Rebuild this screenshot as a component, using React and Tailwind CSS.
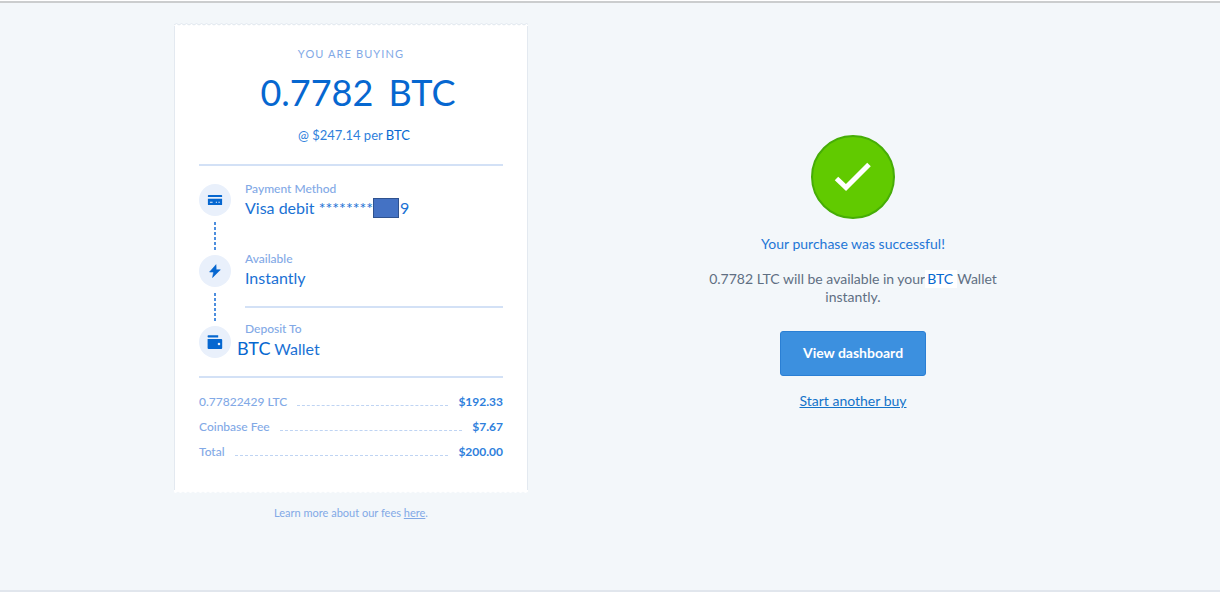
const fees = [
  { label: '0.77822429 LTC', amount: '$192.33' },
  { label: 'Coinbase Fee', amount: '$7.67' },
  { label: 'Total', amount: '$200.00' },
]

const CardIcon = () => (
  <svg viewBox="0 0 16 12" className="w-4 h-3" aria-hidden="true">
    <path fill="#0667d0" d="M1.500 1h13a.6.6 0 0 1 .6.6V3H.9V1.600A.6.6 0 0 1 1.500 1z" />
    <path
      fill="#0667d0"
      fillRule="evenodd"
      d="M.9 4.800h14.200v5.600a.6.6 0 0 1-.6.6h-13a.6.6 0 0 1-.6-.6V4.800zm2 3v.9h2.700v-.9H2.900zm5.900 0v.9H10v-.9H8.800zm2.600 0v.9h1.400v-.9h-1.400z"
    />
  </svg>
)

const BoltIcon = () => (
  <svg viewBox="0 0 12 14" className="w-3 h-3.5" aria-hidden="true">
    <path fill="#0667d0" stroke="#0667d0" strokeWidth=".6" strokeLinejoin="round" d="M7 .7.6 8h4l-1 5.500L11.300 5.800H7.200z" />
  </svg>
)

const WalletIcon = () => (
  <svg viewBox="0 0 16 14" className="w-4 h-3.5" aria-hidden="true">
    <path fill="#0667d0" d="M.6 1a.8.8 0 0 1 .8-.8h9.800V2.500H1.400A.8.8 0 0 1 .6 1.700z" />
    <path
      fill="#0667d0"
      fillRule="evenodd"
      d="M.6 4h13.600a1 1 0 0 1 1 1v8a1 1 0 0 1-1 1H1.600a1 1 0 0 1-1-1V4zM12 7.700a1.300 1.300 0 1 0 0 2.600 1.300 1.300 0 0 0 0-2.600z"
    />
  </svg>
)

const StepIcon = ({ children }) => (
  <div className="w-8 h-8 rounded-full bg-[#e9f0fb] flex items-center justify-center">{children}</div>
)

const Connector = () => (
  <svg viewBox="0 0 2 28" className="w-0.5 h-7 mt-1.5 mb-[5px]" aria-hidden="true">
    <path d="M1 0v28" stroke="#4d8ede" strokeWidth="2" strokeDasharray="3 2" />
  </svg>
)

const Step = ({ label, divided, children }) => (
  <div className={divided ? 'h-[70px] pt-3 border-t-2 border-[#d3e1f6]' : 'h-[70px] pt-3.5'}>
    <p className="text-xs leading-[18px] font-medium text-[#82a9e6]">{label}</p>
    <div className="text-base leading-5 text-[#1a71d4]">{children}</div>
  </div>
)

// perforated edge of the receipt
const PaperEdge = ({ id, stroke, flip }) => (
  <svg className={flip ? 'block w-full h-[3px] rotate-180' : 'block w-full h-[3px]'} aria-hidden="true">
    <defs>
      <pattern id={id} width="5" height="3" patternUnits="userSpaceOnUse">
        <path d="M0 3V2L2.500 0 5 2v1z" fill="#fff" />
        <path d="M0 2 2.500 .5 5 2" fill="none" stroke={stroke} />
      </pattern>
    </defs>
    <rect width="100%" height="3" fill={`url(#${id})`} />
  </svg>
)

const Receipt = () => (
  <div className="w-full max-w-[354px]">
    <PaperEdge id="edge-top" stroke="#dfe6ee" />
    <div className="bg-white border-x border-[#e3e9f0] px-6 pt-5 pb-[26px]">
      <div className="text-center">
        <p className="text-[11px] leading-4 tracking-widest text-[#82a9e6]">YOU ARE BUYING</p>
        <h1 className="mt-[7px] pl-3.5 text-4xl leading-[46px] text-[#0667d0]">
          0.7782 <span className="ml-1.5">BTC</span>
        </h1>
        <p className="mt-2.5 pl-1.5 text-[13px] leading-5 text-[#2f7fdc]">
          @ $247.14 per <span className="text-[#0667d0]">BTC</span>
        </p>
      </div>

      <div className="mt-[19px] border-y-2 border-[#d3e1f6] flex">
        <div className="w-8 mr-3.5 pt-[18px] flex flex-col items-center">
          <StepIcon><CardIcon /></StepIcon>
          <Connector />
          <StepIcon><BoltIcon /></StepIcon>
          <Connector />
          <StepIcon><WalletIcon /></StepIcon>
        </div>
        <div className="flex-1">
          <Step label="Payment Method">
            <div className="flex">
              <span>Visa debit ********</span>
              <span className="w-[26px] h-5 mr-px bg-[#4472c4] border border-[#2f528f]" />
              <span>9</span>
            </div>
          </Step>
          <Step label="Available">Instantly</Step>
          <Step label="Deposit To" divided>
            <span className="-ml-2 text-lg leading-5 text-[#0667d0]">BTC</span> Wallet
          </Step>
        </div>
      </div>

      <dl className="mt-[11px]">
        {fees.map((fee) => (
          <div key={fee.label} className="flex items-center h-[25px] text-xs leading-5">
            <dt className="font-medium text-[#82a9e6]">{fee.label}</dt>
            <span className="flex-1 mx-2.5 mt-2 border-b border-dashed border-[#bfd4f3]" />
            <dd className="font-bold text-[#2f7fdc]">{fee.amount}</dd>
          </div>
        ))}
      </dl>
    </div>
    <PaperEdge id="edge-bottom" stroke="#fff" flip />
    <p className="mt-3 text-center text-[11px] leading-4 text-[#82a9e6]">
      Learn more about our fees <a href="#fees" className="underline">here</a>.
    </p>
  </div>
)

const Success = () => (
  <div className="w-full max-w-[300px] flex flex-col items-center text-center text-sm">
    <div className="w-[84px] h-[84px] rounded-full bg-[#61ca00] border-2 border-[#46ad06] flex items-center justify-center">
      <svg viewBox="0 0 38 30" className="w-[38px] h-[30px]" aria-hidden="true">
        <path d="M2.500 16.500 12 25.500 35 2.500" fill="none" stroke="#fff" strokeWidth="5" />
      </svg>
    </div>
    <p className="mt-4 leading-[18px] text-[#1f76d6]">Your purchase was successful!</p>
    <div className="mt-[17px] leading-[18px] text-[#5f6f83]">
      <div className="flex justify-center">
        <span>0.7782 LTC will be available in your</span>
        <span className="bg-white pl-0.5 pr-1 text-[#0667d0]">BTC</span>
        <span>Wallet</span>
      </div>
      <p>instantly.</p>
    </div>
    <button type="button" className="mt-[25px] w-[146px] h-[45px] rounded-[3px] border border-[#2a7fd4] bg-[#3c90df] text-white font-bold">
      View dashboard
    </button>
    <a href="#buy" className="mt-4 leading-[18px] text-[#1473c9] underline">Start another buy</a>
  </div>
)

export default function App() {
  return (
    <div className="bg-white pt-px pb-1 font-['Lato','Open_Sans',sans-serif]">
      <main className="min-h-[591px] border-t-2 border-t-[#cbcdce] border-b-2 border-b-[#e1e6ed] bg-[#f3f7fa] pt-5 pr-4">
        <div className="mx-auto w-full max-w-[1004px] grid grid-cols-2 items-center justify-items-center">
          <Receipt />
          <Success />
        </div>
      </main>
    </div>
  )
}
